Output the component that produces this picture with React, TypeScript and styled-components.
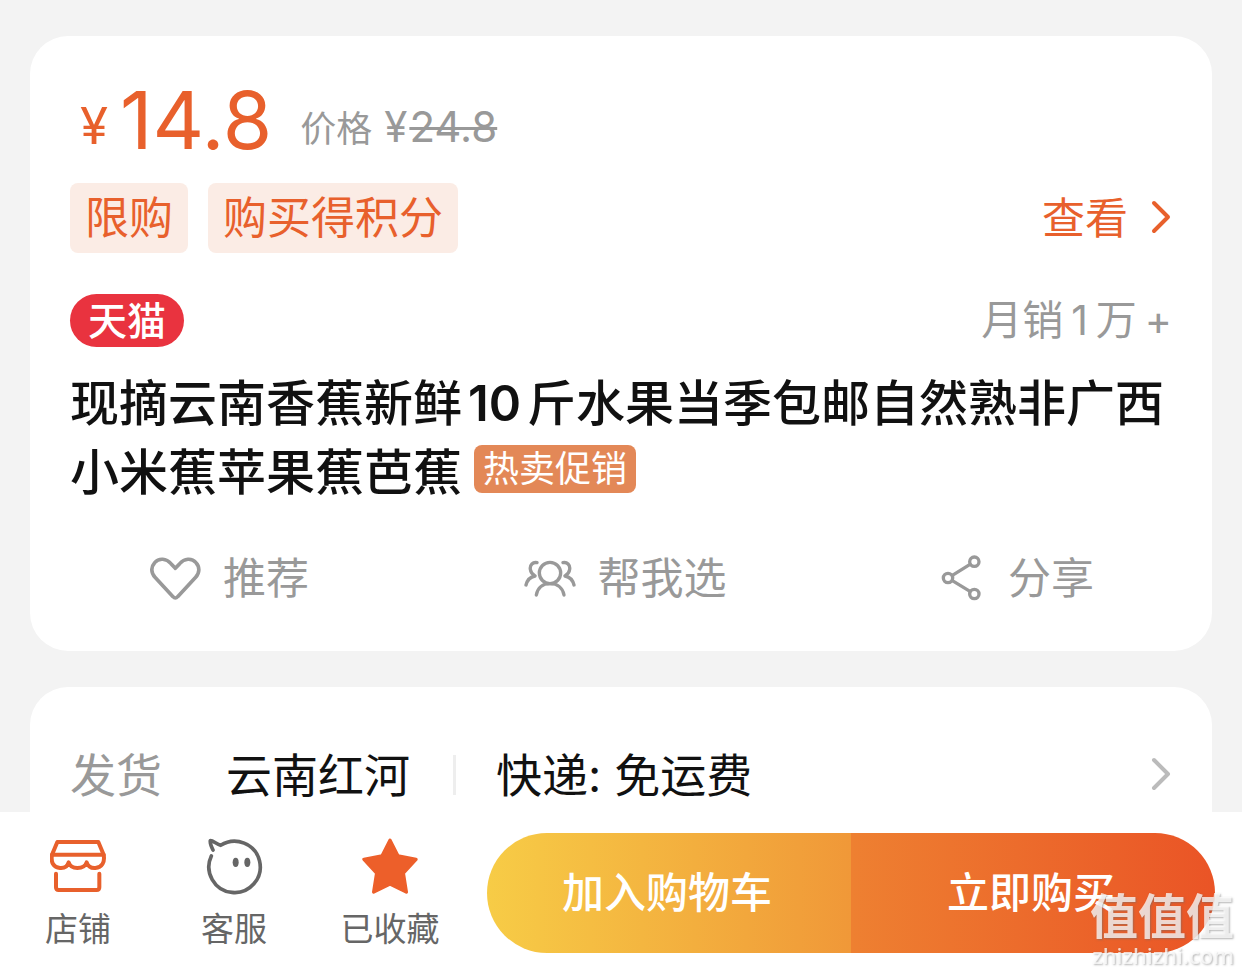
import React from "react";
import styled, { createGlobalStyle } from "styled-components";

const orange = "#e8602c";
const gray = "#999999";

const GlobalStyle = createGlobalStyle`
  * { box-sizing: border-box; }
  body {
    margin: 0;
    background: #f3f3f3;
    color: #111111;
    font-family: Inter, "Noto Sans CJK SC", sans-serif;
  }
  button {
    margin: 0;
    padding: 0;
    border: 0;
    background: none;
    color: inherit;
    font: inherit;
    cursor: pointer;
  }
  a { color: inherit; text-decoration: none; }
  h1, p { margin: 0; }
  svg { display: block; flex: none; }
`;

const Page = styled.div`
  display: flex;
  flex-direction: column;
  height: 100vh;
`;

const Content = styled.main`
  flex: 1;
  min-height: 0;
  overflow-y: auto;
  scrollbar-width: none;
  display: flex;
  flex-direction: column;
  gap: 36px;
  padding: 36px 30px 0;
`;

const Card = styled.section`
  flex: none;
  background: #ffffff;
  border-radius: 38px;
  padding: 48px 40px 43px;
`;

const PriceRow = styled.div`
  display: flex;
  align-items: flex-end;
  margin-bottom: 27px;
  padding-left: 10px;
`;

const Currency = styled.span`
  width: 40px;
  font-size: 51px;
  line-height: 60px;
  color: ${orange};
`;

const Price = styled.strong`
  font-size: 80px;
  font-weight: 400;
  line-height: 72px;
  color: ${orange};
`;

const ListPrice = styled.span`
  display: flex;
  align-items: baseline;
  gap: 12px;
  margin-left: 28px;
  font-size: 36px;
  line-height: 54px;
  color: ${gray};
`;

const OldPrice = styled.span`
  font-size: 42px;
  s {
    margin-left: 2px;
    text-decoration-thickness: 3px;
  }
`;

const Row = styled.div`
  display: flex;
  align-items: center;
  justify-content: space-between;
`;

const Tags = styled.div`
  display: flex;
  gap: 20px;
`;

const Tag = styled.span`
  padding: 0 15px;
  border-radius: 8px;
  background: #fbece5;
  color: ${orange};
  font-size: 44px;
  line-height: 70px;
`;

const ViewLink = styled.a`
  && { color: ${orange}; }
  display: flex;
  align-items: center;
  gap: 22px;
  font-size: 43px;
  line-height: 70px;
`;

const ShopRow = styled(Row)`
  height: 53px;
  margin-top: 41px;
`;

const Tmall = styled.span`
  padding: 0 18px;
  border-radius: 27px;
  background: #e9333f;
  color: #ffffff;
  font-size: 39px;
  font-weight: 500;
  line-height: 53px;
`;

const Sales = styled.span`
  display: flex;
  gap: 8px;
  color: ${gray};
  font-size: 41px;
  line-height: 53px;
`;

const Title = styled.h1`
  margin-top: 22px;
  font-size: 49px;
  font-weight: 500;
  line-height: 69px;
`;

const Quantity = styled.span`
  margin: 0 6px;
  font-weight: 600;
`;

const Promo = styled.span`
  display: inline-block;
  margin-left: 12px;
  padding: 0 9px;
  border-radius: 8px;
  background: #e38857;
  color: #ffffff;
  font-size: 36px;
  font-weight: 400;
  line-height: 48px;
  vertical-align: 8px;
`;

const Actions = styled(Row)`
  height: 60px;
  margin-top: 41px;
  padding: 0 78px 0 80px;
`;

const Action = styled.button<{ $gap?: number }>`
  && { color: ${gray}; font-size: 43px; line-height: 60px; }
  display: flex;
  align-items: center;
  gap: ${(p) => p.$gap ?? 22}px;
`;

const ShippingCard = styled(Card)`
  padding-top: 55px;
  padding-bottom: 54px;
`;

const Shipping = styled.button`
  && { font-size: 46px; line-height: 66px; }
  display: flex;
  align-items: center;
  width: 100%;
  text-align: left;
`;

const ShippingLabel = styled.span`
  width: 156px;
  color: ${gray};
`;

const Divider = styled.span`
  width: 3px;
  height: 40px;
  margin: 0 40px 0 43px;
  background: #eeeeee;
`;

const Fee = styled.span`
  flex: 1;
`;

const BottomBar = styled.footer`
  display: flex;
  align-items: flex-start;
  flex: none;
  height: 162px;
  padding: 21px 27px 0 0;
  background: #ffffff;
`;

const Nav = styled.nav`
  display: flex;
  flex: none;
  margin-right: 19px;
`;

const NavItem = styled.a`
  display: flex;
  flex-direction: column;
  align-items: center;
  gap: 10px;
  width: 156px;
  padding-top: 5px;
  && { color: #666666; }
  font-size: 33px;
  line-height: 48px;
`;

const Purchase = styled.div`
  display: flex;
  flex: 1;
  height: 120px;
  border-radius: 60px;
  overflow: hidden;
`;

const PurchaseButton = styled.button<{ $from: string; $to: string }>`
  && {
    flex: 1;
    padding-right: 4px;
    background: linear-gradient(90deg, ${(p) => p.$from}, ${(p) => p.$to});
    color: #ffffff;
    font-size: 42px;
    font-weight: 500;
    line-height: 60px;
  }
`;

const Watermark = styled.div`
  position: fixed;
  right: 8px;
  bottom: 5px;
  display: flex;
  flex-direction: column;
  align-items: flex-end;
  color: rgba(255, 255, 255, 0.75);
  text-shadow: 1px 1px 2px rgba(110, 110, 110, 0.5);
  pointer-events: none;
`;

const WatermarkName = styled.span`
  font-size: 48px;
  font-weight: 700;
  line-height: 48px;
`;

const WatermarkSite = styled.span`
  font-family: "Noto Sans", sans-serif;
  font-size: 22px;
  font-weight: 500;
  line-height: 28px;
`;

const Line = styled.svg`
  fill: none;
  stroke: currentColor;
  stroke-linecap: round;
  stroke-linejoin: round;
`;

const Eye = styled.ellipse`
  fill: currentColor;
  stroke: none;
`;

const Chevron = ({ color }: { color: string }) => (
  <Line width="22" height="36" viewBox="0 0 22 36" color={color} strokeWidth="4">
    <path d="M4 3 18 17 4 31" />
  </Line>
);

const HeartIcon = () => (
  <Line width="51" height="45" viewBox="1 0 153 135" strokeWidth="11">
    <path d="M77 37 64 23C50 7 28 5 15 20C3 33 4 51 16 64L70 122Q77 130 84 122L138 64C150 51 151 33 139 20C126 5 104 7 90 23Z" />
  </Line>
);

const PeopleIcon = () => (
  <Line width="52" height="39" viewBox="0 0 156 117" strokeWidth="10">
    <circle cx="78" cy="42" r="32" />
    <path d="M37 108C41 86 57 74 78 74C99 74 116 86 120 108" />
    <path d="M39 11C27 8 17 18 19 31C20 40 25 46 33 51C18 54 10 62 6 78" />
    <path d="M117 11C129 8 139 18 137 31C136 40 131 46 123 51C138 54 146 62 150 78" />
  </Line>
);

const ShareIcon = () => (
  <Line width="40" height="46" viewBox="0 0 120 138" strokeWidth="10">
    <circle cx="100" cy="20" r="14" />
    <circle cx="21" cy="69" r="14" />
    <circle cx="100" cy="117" r="14" />
    <path d="M34 61 87 28M34 77 87 109" />
  </Line>
);

const StoreIcon = () => (
  <Line width="57" height="57" viewBox="2 -3 171 171" strokeWidth="12" color={orange}>
    <path d="M24 9H147L163 47H8Z" />
    <path d="M8 47C4 70 12 86 32 87C46 88 55 82 58 70C62 82 70 87 84 87C99 87 108 82 112 70C116 82 124 88 138 87C158 86 167 70 163 47" />
    <path d="M20 104V145Q20 153 28 153H142Q150 153 150 145V104" />
  </Line>
);

const ServiceIcon = () => (
  <Line width="57" height="57" viewBox="0 0 171 171" strokeWidth="11">
    <path d="M16 54A77 77 0 1 0 44 22C31 18 22 8 13 8C12 14 16 26 21 36" />
    <Eye cx="89" cy="73" rx="9" ry="14" />
    <Eye cx="124" cy="73" rx="9" ry="14" />
  </Line>
);

const StarIcon = () => (
  <svg width="57" height="57" viewBox="0 0 171 171" fill="#ed5f2a" stroke="#ed5f2a" strokeWidth="10" strokeLinejoin="round">
    <path d="M84 7 108 54 162 64 124 105 133 162 84 138 35 162 44 105 6 64 60 54Z" />
  </svg>
);

export default function App() {
  return (
    <Page>
      <GlobalStyle />
      <Content>
        <Card>
          <PriceRow>
            <Currency>¥</Currency>
            <Price>14.8</Price>
            <ListPrice>
              价格
              <OldPrice>
                ¥<s>24.8</s>
              </OldPrice>
            </ListPrice>
          </PriceRow>
          <Row>
            <Tags>
              <Tag>限购</Tag>
              <Tag>购买得积分</Tag>
            </Tags>
            <ViewLink href="#offers">
              查看
              <Chevron color={orange} />
            </ViewLink>
          </Row>
          <ShopRow>
            <Tmall>天猫</Tmall>
            <Sales>
              <span>月销</span>
              <span>1</span>
              <span>万</span>
              <span>+</span>
            </Sales>
          </ShopRow>
          <Title>
            现摘云南香蕉新鲜<Quantity>10</Quantity>斤水果当季包邮自然熟非广西小米蕉苹果蕉芭蕉
            <Promo>热卖促销</Promo>
          </Title>
          <Actions>
            <Action type="button">
              <HeartIcon />
              推荐
            </Action>
            <Action type="button">
              <PeopleIcon />
              帮我选
            </Action>
            <Action type="button" $gap={27}>
              <ShareIcon />
              分享
            </Action>
          </Actions>
        </Card>
        <ShippingCard>
          <Shipping type="button">
            <ShippingLabel>发货</ShippingLabel>
            <span>云南红河</span>
            <Divider />
            <Fee>快递: 免运费</Fee>
            <Chevron color="#bbbbbb" />
          </Shipping>
        </ShippingCard>
      </Content>
      <BottomBar>
        <Nav>
          <NavItem href="#store">
            <StoreIcon />
            店铺
          </NavItem>
          <NavItem href="#service">
            <ServiceIcon />
            客服
          </NavItem>
          <NavItem href="#favorites">
            <StarIcon />
            已收藏
          </NavItem>
        </Nav>
        <Purchase>
          <PurchaseButton type="button" $from="#f7cc46" $to="#f09838">
            加入购物车
          </PurchaseButton>
          <PurchaseButton type="button" $from="#ee8031" $to="#ea5426">
            立即购买
          </PurchaseButton>
        </Purchase>
      </BottomBar>
      <Watermark>
        <WatermarkName>值值值</WatermarkName>
        <WatermarkSite>zhizhizhi.com</WatermarkSite>
      </Watermark>
    </Page>
  );
}
